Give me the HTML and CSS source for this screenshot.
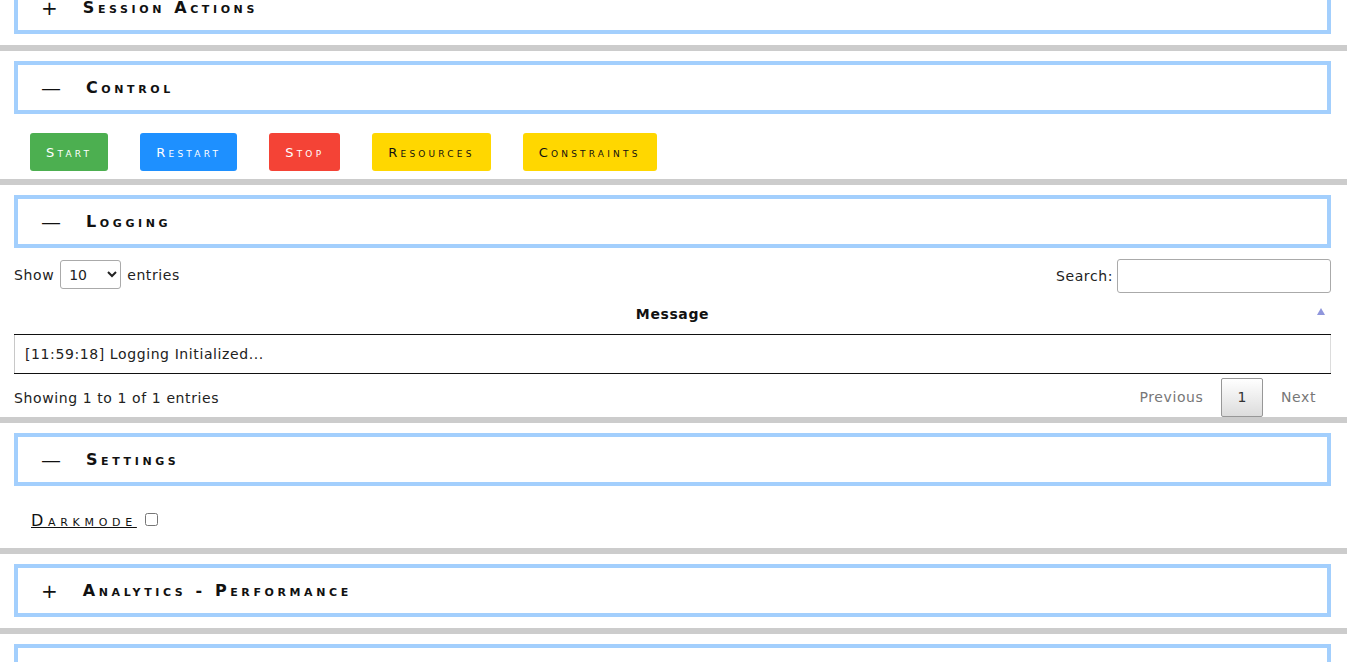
FILE: index.html
```html
<!DOCTYPE html>
<html lang="en">
<head>
<meta charset="utf-8">
<title>Dashboard</title>
<link rel="stylesheet" href="styles.css">
</head>
<body>
<main class="page">
  <section class="panel first">
    <div class="panel-head"><span class="toggle">+</span><h2 class="title">Session Actions</h2></div>
  </section>
  <hr class="sep">
  <section class="panel">
    <div class="panel-head"><span class="toggle">—</span><h2 class="title">Control</h2></div>
    <div class="controls">
      <button class="btn btn-green">Start</button>
      <button class="btn btn-blue">Restart</button>
      <button class="btn btn-red">Stop</button>
      <button class="btn btn-gold">Resources</button>
      <button class="btn btn-gold">Constraints</button>
    </div>
  </section>
  <hr class="sep">
  <section class="panel">
    <div class="panel-head"><span class="toggle">—</span><h2 class="title">Logging</h2></div>
    <div class="dt">
      <div class="dt-top">
        <label class="dt-length">Show
          <select class="dt-select"><option>10</option><option>25</option><option>50</option><option>100</option></select>
          entries</label>
        <label class="dt-search">Search:<input class="dt-input" type="search"></label>
      </div>
      <table class="dt-table">
        <thead><tr><th class="sorted">Message<span class="sort-icon"></span></th></tr></thead>
        <tbody><tr><td>[11:59:18] Logging Initialized...</td></tr></tbody>
      </table>
      <div class="dt-bottom">
        <div class="dt-info">Showing 1 to 1 of 1 entries</div>
        <div class="dt-paging">
          <span class="pg pg-disabled">Previous</span>
          <span class="pg pg-current">1</span>
          <span class="pg pg-disabled">Next</span>
        </div>
      </div>
    </div>
  </section>
  <hr class="sep">
  <section class="panel">
    <div class="panel-head"><span class="toggle">—</span><h2 class="title">Settings</h2></div>
    <div class="settings">
      <label class="setting"><span class="setting-name">Darkmode</span><input type="checkbox" class="check"></label>
    </div>
  </section>
  <hr class="sep">
  <section class="panel">
    <div class="panel-head"><span class="toggle">+</span><h2 class="title">Analytics - Performance</h2></div>
  </section>
  <hr class="sep">
  <section class="panel">
    <div class="panel-head"><span class="toggle">+</span><h2 class="title">Analytics - Resources</h2></div>
  </section>
</main>
</body>
</html>
```

FILE: styles.css
```css
html, body {
  margin: 0;
  padding: 0;
  background: #ffffff;
}
body {
  font-family: "DejaVu Sans", Verdana, sans-serif;
  font-size: 14px;
  letter-spacing: 0.6px;
  color: #222;
  overflow: hidden;
}
.page {
  display: flex;
  flex-direction: column;
  margin-top: -29px;
}
.sep {
  margin: 0;
  border: 0;
  height: 6px;
  background: #cccccc;
  width: 1347px;
}
.panel-head {
  margin: 10px 17px 11px 14px;
  height: 45px;
  border: 4px solid #a3cffd;
  display: flex;
  align-items: center;
  padding-left: 23px;
}
.toggle {
  font-size: 20px;
  font-weight: normal;
  letter-spacing: 0;
  color: #111;
  margin-right: 25px;
  line-height: 1;
}
.title {
  margin: 0;
  font-family: "DejaVu Sans", sans-serif;
  font-size: 16px;
  font-weight: bold;
  font-variant: small-caps;
  letter-spacing: 3.6px;
  color: #111;
}
.controls {
  display: flex;
  gap: 32px;
  padding: 8px 30px 8px 30px;
}
.btn {
  height: 38px;
  padding: 0 16px;
  border: 0;
  border-radius: 3px;
  font-family: "DejaVu Sans", sans-serif;
  font-size: 13px;
  font-variant: small-caps;
  letter-spacing: 3.2px;
  color: #fff;
  cursor: pointer;
}
.btn-green { background: #4caf50; }
.btn-blue { background: #1e90ff; }
.btn-red { background: #f44336; }
.btn-gold { background: #ffd700; color: #111; }

.dt {
  margin: 0 17px 0 14px;
}
.dt-top {
  display: flex;
  justify-content: space-between;
  align-items: flex-start;
  height: 35px;
}
.dt-length {
  margin-top: 1px;
  display: flex;
  align-items: center;
  gap: 6px;
}
.dt-select {
  width: 61px;
  height: 29px;
  font-family: "DejaVu Sans", sans-serif;
  font-size: 14px;
  padding: 3px 4px;
  border: 1px solid #aaa;
  border-radius: 3px;
  background: #fff;
  color: #222;
}
.dt-search {
  display: flex;
  align-items: center;
  gap: 4px;
}
.dt-input {
  width: 214px;
  height: 34px;
  box-sizing: border-box;
  border: 1px solid #aaa;
  border-radius: 3px;
  padding: 4px;
  background: #fff;
}
.dt-table {
  width: 100%;
  border-collapse: collapse;
}
.dt-table th {
  position: relative;
  font-weight: bold;
  padding: 10px 18px 10px;
  line-height: 20px;
  border-bottom: 1px solid #111;
  color: #111;
}
.sort-icon {
  position: absolute;
  right: 6px;
  top: 14px;
  width: 0;
  height: 0;
  border-left: 4px solid transparent;
  border-right: 4px solid transparent;
  border-bottom: 7px solid #8f96dc;
}
.dt-table td {
  padding: 9px 10px;
  line-height: 20px;
  border-left: 1px solid #c8c8c8;
  border-right: 1px solid #dcdcdc;
  border-bottom: 1px solid #111;
  color: #222;
}
.dt-bottom {
  display: flex;
  justify-content: space-between;
  align-items: center;
  padding-top: 4px;
}
.dt-paging {
  display: flex;
  align-items: center;
}
.pg {
  margin-left: 2px;
  padding: 7px 14px;
  line-height: 23px;
  border: 1px solid transparent;
  border-radius: 2px;
}
.pg-disabled { color: #777; }
.pg-current {
  padding: 7px 15px;
  margin-left: 3px;
  margin-right: 1px;
  color: #333;
  border-color: #979797;
  background: linear-gradient(to bottom, #ffffff 0%, #dcdcdc 100%);
}
.settings {
  padding: 14px 0 17px 31px;
  line-height: 20px;
}
.setting {
  display: flex;
  align-items: center;
  gap: 8px;
}
.setting-name {
  font-variant: small-caps;
  font-size: 16px;
  letter-spacing: 4.7px;
  text-decoration: underline;
  color: #111;
}
.check {
  margin: 0 0 3px 0;
  width: 13px;
  height: 13px;
}
```
